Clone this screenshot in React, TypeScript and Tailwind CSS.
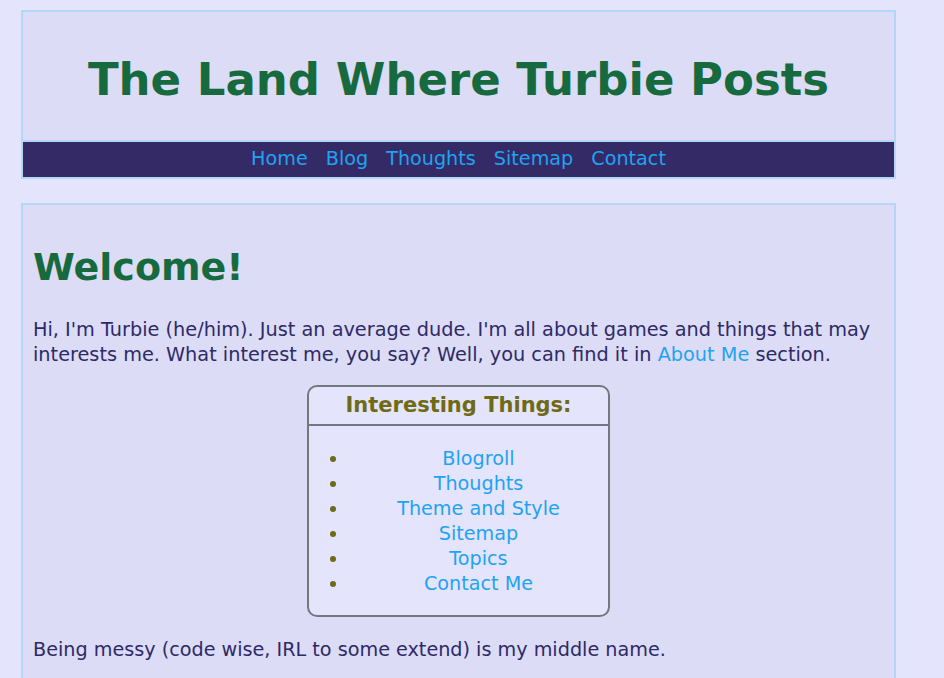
import React from 'react';

const NAV = ['Home', 'Blog', 'Thoughts', 'Sitemap', 'Contact'];
const THINGS = ['Blogroll', 'Thoughts', 'Theme and Style', 'Sitemap', 'Topics', 'Contact Me'];

const App: React.FC = () => {
  return (
    <div className="min-h-[678px] bg-[#e4e4fc] pt-[10px] pl-[21px] font-['DejaVu_Sans',Verdana,sans-serif] text-[#2e2a66]">
      <header className="w-[875px] border-2 border-[#b4d6f7] bg-[#dcdcf7]">
        <h1 className="pt-[40px] pb-[33px] text-center text-[45px] font-bold leading-[55px] text-[#176a3e]">
          The Land Where Turbie Posts
        </h1>
        <nav className="border-t-2 border-[#b4d6f7] bg-[#342a66] flex justify-center gap-[18px] h-[37px] items-center text-[19.2px] text-[#1fa3f2]">
          {NAV.map((n) => (
            <a key={n} href="#">{n}</a>
          ))}
        </nav>
      </header>

      <main className="mt-[24px] w-[875px] border-2 border-b-0 border-[#b4d6f7] bg-[#dcdcf7] px-[10px] pb-[20px]">
        <h2 className="pt-[38px] pb-[26px] text-[38px] font-bold leading-[48px] text-[#176a3e]">Welcome!</h2>
        <p className="text-[19.3px] leading-[25px]">
          Hi, I'm Turbie (he/him). Just an average dude. I'm all about games and things that may interests me. What interest me, you say? Well, you can find it in{' '}
          <a href="#" className="text-[#1fa3f2]">About Me</a> section.
        </p>

        <div className="mx-auto mt-[18px] w-[303px] rounded-[10px] border-2 border-[#77767f] bg-[#e4e4fc]">
          <h3 className="border-b-2 border-[#77767f] py-[7px] text-center text-[21px] font-bold leading-[23px] text-[#6e6a16]">
            Interesting Things:
          </h3>
          <ul className="list-disc pl-[40px] pt-[20px] pb-[19px] text-[19.2px] leading-[25px] marker:text-[#6e6a16]">
            {THINGS.map((t) => (
              <li key={t} className="text-center">
                <a href="#" className="text-[#1fa3f2]">{t}</a>
              </li>
            ))}
          </ul>
        </div>

        <p className="mt-[20px] text-[19.2px] leading-[25px]">Being messy (code wise, IRL to some extend) is my middle name.</p>
      </main>
    </div>
  );
};

export default App;
